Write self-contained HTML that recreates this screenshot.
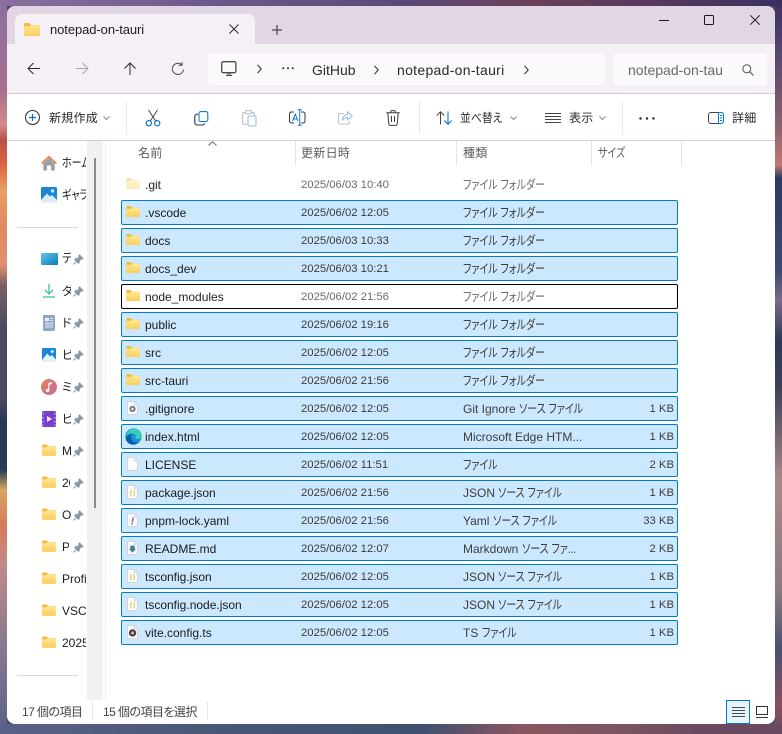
<!DOCTYPE html>
<html lang="ja"><head><meta charset="utf-8"><title>notepad-on-tauri</title>
<style>
html,body{margin:0;padding:0;width:782px;height:734px;overflow:hidden;background:#4a4a66}
*{box-sizing:border-box}
body{position:relative;font-family:"Liberation Sans","Noto Sans CJK JP",sans-serif;font-feature-settings:"palt";color:#1c1c1c}
.a{position:absolute}
.a,span.a{white-space:nowrap}
b{font-weight:normal;font-size:12.5px;letter-spacing:0;display:inline-block;transform:scaleX(.8);transform-origin:0 50%}
#win{position:absolute;left:7px;top:6px;width:768px;height:718px;border-radius:8px;background:#fff;overflow:hidden}
#layer{position:absolute;left:0;top:0;width:782px;height:734px}
.row{position:absolute;left:121px;width:557px;height:25px;border-radius:2px}
.sel{background:#cce8ff;border:1px solid #0078d4}
.foc{background:#fff;border:1px solid #000}
.non{border:1px solid transparent}
.row span{position:absolute;top:4px;line-height:16px;white-space:nowrap}
.n{left:23px;font-size:12px;color:#1a1a1a}
.d{left:179px;font-size:11.3px;color:#4a4a4a}
.t{left:341px;font-size:12px;color:#3c3c3c;width:122px;overflow:hidden}
.s{right:3px;font-size:11.3px;color:#3c3c3c}
.sel .d{color:#3a3a3a}
.non .n,.foc .n{color:#222}
.foc .d,.foc .t,.non .d,.non .t{color:#6b6b6b}
.row svg{position:absolute}
.r{left:4px;top:5px}
.i{left:5px;top:4px}
.h{top:145px;font-size:12px;line-height:16px;color:#5c5c5c;letter-spacing:.3px}
.hs{top:141px;width:1px;height:25px;background:#e5e5e5}
.ts{top:102px;width:1px;height:32px;background:#e6e6e6}
.tl{top:110px;font-size:12px;line-height:16px;color:#2a2a2a;letter-spacing:.25px}
.nt{font-size:14px;line-height:18px;color:#2c2c2c;top:61px}
.si{left:62px;font-size:12px;line-height:16px;color:#1c1c1c;overflow:hidden}
.pin{left:73px}
svg{display:block;overflow:visible}
.st{top:704px;font-size:12px;line-height:16px;color:#444;letter-spacing:-.55px}
</style></head><body>
<svg width="0" height="0" style="position:absolute">
<defs>
<linearGradient id="fg" x1="0" y1="0" x2="0" y2="1"><stop offset="0" stop-color="#ffe898"/><stop offset="1" stop-color="#fcce58"/></linearGradient>
<symbol id="f" viewBox="0 0 16 13"><path d="M0 1.5A1.5 1.5 0 0 1 1.5 0H5L7 2H14.5A1.5 1.5 0 0 1 16 3.5V11.5A1.5 1.5 0 0 1 14.5 13H1.5A1.5 1.5 0 0 1 0 11.5Z" fill="#f5bc3c"/><path d="M0 3.4H5.2L7.2 2.2H14.5A1.5 1.5 0 0 1 16 3.7V11.5A1.5 1.5 0 0 1 14.5 13H1.5A1.5 1.5 0 0 1 0 11.5Z" fill="url(#fg)"/></symbol>
<symbol id="doc" viewBox="0 0 12 15"><path d="M.5 1.2A.7.7 0 0 1 1.2.5H8L11.5 4V13.8A.7.7 0 0 1 10.8 14.5H1.2A.7.7 0 0 1 .5 13.8Z" fill="#fbfbfb" stroke="#d0d0d0"/><path d="M8 .5V4H11.5" fill="#ececec" stroke="#d4d4d4"/></symbol>
<symbol id="gear" viewBox="0 0 12 15"><use href="#doc" width="12" height="15"/><circle cx="6" cy="8.5" r="2.4" fill="#d8dadc" stroke="#6f7780" stroke-width="2"/><circle cx="6" cy="8.5" r=".9" fill="#fff"/></symbol>
<symbol id="json" viewBox="0 0 12 15"><use href="#doc" width="12" height="15"/><path d="M5 6Q4.2 6 4.2 6.9V8.2Q4.2 9 3.6 9Q4.2 9 4.2 9.8V11Q4.2 11.9 5 11.9M7 6Q7.8 6 7.8 6.9V8.2Q7.8 9 8.4 9Q7.8 9 7.8 9.8V11Q7.8 11.9 7 11.9" fill="none" stroke="#c9bb40" stroke-width="1"/></symbol>
<symbol id="yaml" viewBox="0 0 12 15"><use href="#doc" width="12" height="15"/><path d="M6.8 4.8L5.8 9.8" stroke="#9a4fb5" stroke-width="1.6"/><circle cx="5.4" cy="11.6" r="1" fill="#9a4fb5"/></symbol>
<symbol id="md" viewBox="0 0 12 15"><use href="#doc" width="12" height="15"/><path d="M3.6 5H8.4V8.5H9.8L6 12.5L2.2 8.5H3.6Z" fill="#3f7c9c"/></symbol>
<symbol id="vite" viewBox="0 0 12 15"><use href="#doc" width="12" height="15"/><circle cx="6" cy="8.5" r="4" fill="#4b3a4a"/><circle cx="6" cy="8.5" r="1.7" fill="#eaa8a8"/></symbol>
<symbol id="edge" viewBox="0 0 17 17"><circle cx="8.5" cy="8.5" r="8.2" fill="#1493dc"/><path d="M1 9C1.5 4 5 .6 9 .4C13.5.2 16.8 3.5 16.8 8.5C16.8 10 15 11 12.5 11C10.5 11 9.8 10 10.5 9C11.5 7.5 10 5.5 7.5 5.5C4 5.5 1.5 7.5 1 9Z" fill="#38cdb4"/><path d="M6 9.5C6 13 9.5 15.5 13.5 14C11.5 16.5 8 17.4 5 16C2 14.5.6 12 .8 9.5C2 7.3 4.5 6 7 6.3C6.4 7.3 6 8.3 6 9.5Z" fill="#0e5ba8"/></symbol>
<symbol id="pin" viewBox="0 0 11 11"><path d="M6.5 .8L10.2 4.5L9.2 5.2L8.2 5L6.3 7L6.3 8.8L5.3 9.4L1.6 5.7L2.2 4.7H4L6 2.8L5.8 1.7Z" fill="#8f979e" stroke="#8f979e" stroke-width=".8" stroke-linejoin="round"/><path d="M3 8L.6 10.4" stroke="#8f979e" stroke-width="1.1"/></symbol>
</defs></svg>

<!-- wallpaper -->
<div class="a" style="left:0;top:0;width:7px;height:734px;background:linear-gradient(180deg,#8b6fa0 0,#a8708f 90px,#d08a88 125px,#b84f4a 140px,#e0653f 165px,#e8a060 190px,#e08a60 225px,#e09070 265px,#7a6068 285px,#4a4a60 330px,#4a4a60 400px,#2a3a55 420px,#2a3a55 470px,#d8a860 490px,#d87a5a 525px,#c08a88 565px,#8a7a90 640px,#5a6088 734px)"></div>
<div class="a" style="left:775px;top:0;width:7px;height:734px;background:linear-gradient(180deg,#3a3060 0,#5a4a70 60px,#8a6070 125px,#c07a70 165px,#2a3a60 178px,#3a4a70 270px,#7a6a88 300px,#2a3a58 340px,#3a4058 385px,#a88888 480px,#8a7a80 590px,#4a5070 650px,#8a5060 705px,#6a4a60 734px)"></div>
<div class="a" style="left:0;top:0;width:782px;height:6px;background:linear-gradient(90deg,#8b6f9e 0,#6d5a8c 200px,#5a4a7a 400px,#6a4058 530px,#5a3a5e 640px,#3a3060 782px)"></div>
<div class="a" style="left:0;top:724px;width:782px;height:10px;background:linear-gradient(90deg,#5a6088 0,#4a5878 200px,#3f5070 420px,#8a5560 520px,#7a5560 620px,#6a4a60 700px,#6a4a60 782px)"></div>

<div id="win">
<div id="layer" style="left:-7px;top:-6px">
<!-- chrome backgrounds -->
<div class="a" style="left:0;top:0;width:782px;height:44px;background:#e3d6e4"></div>
<div class="a" style="left:0;top:44px;width:782px;height:49px;background:#f5f0f5"></div>
<div class="a" style="left:0;top:93px;width:782px;height:1px;background:#dccbd6"></div>
<div class="a" style="left:0;top:140px;width:782px;height:1px;background:#dccbd6"></div>
<!-- tab -->
<div class="a" style="left:15px;top:14px;width:240px;height:31px;background:#f5f0f5;border-radius:7px 7px 0 0"></div>
<svg class="a" style="left:24px;top:23px" width="16" height="13"><use href="#f" width="16" height="13"/></svg>
<span class="a" style="left:50px;top:22px;font-size:13px;line-height:16px;color:#1c1c1c;letter-spacing:-.08px">notepad-on-tauri</span>
<svg class="a" style="left:229px;top:24px" width="10" height="10"><path d="M.5.5L9.5 9.5M9.5.5L.5 9.5" stroke="#2a2a2a" stroke-width="1"/></svg>
<svg class="a" style="left:272px;top:25px" width="10" height="10"><path d="M5 0V10M0 5H10" stroke="#2a2a2a" stroke-width="1"/></svg>
<!-- window controls -->
<div class="a" style="left:659px;top:20px;width:10px;height:1px;background:#1a1a1a"></div>
<div class="a" style="left:704px;top:15px;width:10px;height:10px;border:1px solid #1a1a1a;border-radius:1.5px"></div>
<svg class="a" style="left:750px;top:15px" width="10" height="10"><path d="M.3.3L9.7 9.7M9.7.3L.3 9.7" stroke="#1a1a1a" stroke-width="1"/></svg>
<!-- nav -->
<svg class="a" style="left:27px;top:62px" width="14" height="13"><path d="M13 6.5H1.5M6.5 1L1 6.5L6.5 12" fill="none" stroke="#2a2a2a" stroke-width="1"/></svg>
<svg class="a" style="left:75px;top:62px" width="14" height="13"><path d="M1 6.5H12.5M7.5 1L13 6.5L7.5 12" fill="none" stroke="#aaa6ab" stroke-width="1"/></svg>
<svg class="a" style="left:123px;top:62px" width="14" height="14"><path d="M7 13V1.5M1.5 6.5L7 1L12.5 6.5" fill="none" stroke="#2a2a2a" stroke-width="1"/></svg>
<svg class="a" style="left:171px;top:62px" width="14" height="14"><path d="M12.5 7.5A5.6 5.6 0 1 1 10.6 2.6M11 0V3.2H7.8" fill="none" stroke="#4a4a4a" stroke-width="1"/></svg>
<div class="a" style="left:208px;top:53px;width:397px;height:32px;background:#fbf9fb;border-radius:4px"></div>
<div class="a" style="left:613px;top:53px;width:154px;height:33px;background:#fbf9fb;border-radius:4px"></div>
<svg class="a" style="left:221px;top:61px" width="16" height="16"><rect x=".7" y=".7" width="14.2" height="11" rx="1.6" fill="none" stroke="#4a4a4a" stroke-width="1.3"/><path d="M5 14.5H11M7 12V14M9 12V14" stroke="#4a4a4a" stroke-width="1"/></svg>
<svg class="a" style="left:257px;top:64px" width="5" height="10"><path d="M.5.8L4.2 5L.5 9.2" fill="none" stroke="#2a2a2a" stroke-width="1"/></svg>
<svg class="a" style="left:282px;top:67px" width="12" height="3"><circle cx="1.2" cy="1.2" r="1" fill="#333"/><circle cx="6" cy="1.2" r="1" fill="#333"/><circle cx="10.8" cy="1.2" r="1" fill="#333"/></svg>
<span class="a nt" style="left:312px">GitHub</span>
<svg class="a" style="left:374px;top:65px" width="5" height="10"><path d="M.5.8L4.2 5L.5 9.2" fill="none" stroke="#2a2a2a" stroke-width="1"/></svg>
<span class="a nt" style="left:397px;letter-spacing:.3px">notepad-on-tauri</span>
<svg class="a" style="left:524px;top:65px" width="5" height="10"><path d="M.5.8L4.2 5L.5 9.2" fill="none" stroke="#2a2a2a" stroke-width="1"/></svg>
<span class="a nt" style="left:628px;width:94px;overflow:hidden;color:#6a6a6a">notepad-on-tauri</span>
<svg class="a" style="left:742px;top:64px" width="12" height="12"><circle cx="4.8" cy="4.8" r="4" fill="none" stroke="#555" stroke-width="1"/><path d="M7.8 7.8L11.5 11.5" stroke="#555" stroke-width="1.1"/></svg>
<!-- toolbar -->
<svg class="a" style="left:25px;top:110px" width="16" height="16"><circle cx="7.5" cy="7.5" r="7" fill="none" stroke="#3a3a3a" stroke-width="1.1"/><path d="M7.5 4V11M4 7.5H11" stroke="#0a6cc4" stroke-width="1.2"/></svg>
<span class="a tl" style="left:49px">新規作成</span>
<svg class="a" style="left:103px;top:116px" width="7" height="5"><path d="M.5.5L3.5 3.5L6.5.5" fill="none" stroke="#8a8a8a"/></svg>
<div class="a ts" style="left:126px"></div>
<svg class="a" style="left:145px;top:109px" width="16" height="18"><path d="M3.5 1L11 12.5M12.5 1L5 12.5" fill="none" stroke="#444" stroke-width="1"/><circle cx="3.8" cy="14.2" r="2.6" fill="none" stroke="#0a78d4" stroke-width="1.2"/><circle cx="12.2" cy="14.2" r="2.6" fill="none" stroke="#0a78d4" stroke-width="1.2"/></svg>
<svg class="a" style="left:194px;top:111px" width="15" height="15"><rect x="5" y=".6" width="8.8" height="10" rx="2" fill="none" stroke="#0a78d4" stroke-width="1.1"/><path d="M4 3.2H3A2.2 2.2 0 0 0 .8 5.4V11.6A2.4 2.4 0 0 0 3.2 14H8.5A2 2 0 0 0 10.5 12.5" fill="none" stroke="#333" stroke-width="1.1"/></svg>
<svg class="a" style="left:242px;top:110px" width="15" height="17"><path d="M3 2.5H1.8A1.2 1.2 0 0 0 .6 3.7V13A1.2 1.2 0 0 0 1.8 14.2H5M10 2.5H11.2A1.2 1.2 0 0 1 12.4 3.7V5.5" fill="none" stroke="#bbb" stroke-width="1"/><rect x="3.5" y=".6" width="6" height="3.2" rx="1" fill="none" stroke="#bbb"/><rect x="6" y="6" width="8" height="10" rx="1.5" fill="none" stroke="#8fc4ea" stroke-width="1.1"/></svg>
<svg class="a" style="left:289px;top:109px" width="17" height="17"><path d="M5 3H2.5A2 2 0 0 0 .5 5V12A2 2 0 0 0 2.5 14H5M12 3H14A2 2 0 0 1 16 5V12A2 2 0 0 1 14 14H12" fill="none" stroke="#333" stroke-width="1"/><path d="M3.5 12L6.3 5.2L9 12M4.5 10H8" fill="none" stroke="#0a78d4" stroke-width="1"/><path d="M8.6 .7H12.8M10.7.7V16.3M8.6 16.3H12.8" fill="none" stroke="#0a78d4" stroke-width="1"/></svg>
<svg class="a" style="left:338px;top:111px" width="15" height="14"><path d="M5.5 2.5H2A1.4 1.4 0 0 0 .6 3.9V11.6A1.4 1.4 0 0 0 2 13H10A1.4 1.4 0 0 0 11.4 11.6V10" fill="none" stroke="#c0c0c0" stroke-width="1"/><path d="M9.5.8L14.3 4.8L9.5 8.8V6.5C7 6.5 5.5 7.5 4.5 9.5C4.5 6 6.5 3.5 9.5 3.2Z" fill="none" stroke="#8fc4ea" stroke-width="1"/></svg>
<svg class="a" style="left:386px;top:110px" width="14" height="16"><path d="M.3 2.8H13.7M4.8 2.8V1.6A1 1 0 0 1 5.8.6H8.2A1 1 0 0 1 9.2 1.6V2.8M1.8 2.8L2.8 14A1.6 1.6 0 0 0 4.4 15.4H9.6A1.6 1.6 0 0 0 11.2 14L12.2 2.8M5.5 6V12M8.5 6V12" fill="none" stroke="#3a3a3a" stroke-width="1"/></svg>
<div class="a ts" style="left:419px"></div>
<svg class="a" style="left:436px;top:111px" width="17" height="14"><path d="M4.5 13.5V.8M.8 4.5L4.5.8L8.2 4.5" fill="none" stroke="#444" stroke-width="1"/><path d="M12 .5V13.2M8.3 9.5L12 13.2L15.7 9.5" fill="none" stroke="#0a78d4" stroke-width="1.1"/></svg>
<span class="a tl" style="left:460px"><b style="font-size:12px;transform:scaleX(.9)">並べ替え</b></span>
<svg class="a" style="left:510px;top:116px" width="7" height="5"><path d="M.5.5L3.5 3.5L6.5.5" fill="none" stroke="#8a8a8a"/></svg>
<svg class="a" style="left:545px;top:113px" width="16" height="10"><path d="M0 .5H16M0 3.5H16M0 6.5H16M0 9.5H16" stroke="#444" stroke-width="1"/></svg>
<span class="a tl" style="left:569px">表示</span>
<svg class="a" style="left:599px;top:116px" width="7" height="5"><path d="M.5.5L3.5 3.5L6.5.5" fill="none" stroke="#8a8a8a"/></svg>
<div class="a ts" style="left:622px"></div>
<svg class="a" style="left:639px;top:117px" width="16" height="3"><circle cx="1.5" cy="1.5" r="1.2" fill="#222"/><circle cx="8" cy="1.5" r="1.2" fill="#222"/><circle cx="14.5" cy="1.5" r="1.2" fill="#222"/></svg>
<svg class="a" style="left:708px;top:112px" width="16" height="12"><rect x=".5" y=".5" width="15" height="11" rx="2.5" fill="none" stroke="#444"/><path d="M10.5.5H13A2.5 2.5 0 0 1 15.5 3V9A2.5 2.5 0 0 1 13 11.5H10.5Z" fill="#fff" stroke="#0a78d4"/><path d="M12 3.5H14M12 6H14M12 8.5H14" stroke="#0a78d4"/></svg>
<span class="a tl" style="left:732px">詳細</span>
<!-- sidebar -->
<div class="a" style="left:87px;top:141px;width:16px;height:559px;background:#f1f1f1"></div>
<div class="a" style="left:94px;top:158px;width:2px;height:350px;background:#8a8a8a"></div>
<div class="a" style="left:105px;top:141px;width:1px;height:559px;background:#f0f0f0"></div>
<div class="a" style="left:17px;top:227px;width:61px;height:1px;background:#d8d8d8"></div>
<div class="a" style="left:17px;top:675px;width:61px;height:1px;background:#d8d8d8"></div>

<svg class="a" style="left:41px;top:155px" width="16" height="16"><path d="M8 .5L16 8L14.6 9L8 3L1.4 9L0 8Z" fill="#e2824a"/><path d="M2.3 8.5L8 3.2L13.7 8.5V15.5H10V10.5H6V15.5H2.3Z" fill="#9aa0a8"/></svg>
<span class="a si" style="top:155px;width:24px"><b>ホーム</b></span>
<svg class="a" style="left:41px;top:187px" width="16" height="16"><rect width="16" height="15.5" rx="1.5" fill="#1a86d8"/><path d="M0 13L6 6.5L9 9.5L11 8L16 13V14A1.5 1.5 0 0 1 14.5 15.5H1.5A1.5 1.5 0 0 1 0 14Z" fill="#d8ecfa"/><circle cx="11.5" cy="4" r="1.7" fill="#cfe8fa"/></svg>
<span class="a si" style="top:187px;width:24px"><b>ギャラ</b></span>

<svg class="a" style="left:41px;top:253px" width="17" height="12"><defs><linearGradient id="dk" x1="0" y1="0" x2="1" y2="1"><stop offset="0" stop-color="#5fc8ea"/><stop offset="1" stop-color="#0d78b8"/></linearGradient></defs><rect width="17" height="12" rx="1" fill="url(#dk)"/></svg>
<span class="a si" style="top:250px;width:9px">デ</span><svg class="a pin" style="top:254px" width="11" height="11"><use href="#pin" width="11" height="11"/></svg>
<svg class="a" style="left:43px;top:284px" width="12" height="14"><path d="M6 0V9.5M1.8 5.8L6 10L10.2 5.8M0 13H12" fill="none" stroke="#3dbfa2" stroke-width="1.3"/></svg>
<span class="a si" style="top:283px;width:9px">ダ</span><svg class="a pin" style="top:286px" width="11" height="11"><use href="#pin" width="11" height="11"/></svg>
<svg class="a" style="left:43px;top:315px" width="12" height="16"><rect width="12" height="16" rx="1.2" fill="#8fa8c4"/><rect x="2" y="3" width="4" height="3" fill="#eef3f8"/><path d="M7 3.5H10M7 5.5H10M2 8H10M2 10H10M2 12H10" stroke="#dde6ef" stroke-width=".9"/></svg>
<span class="a si" style="top:315px;width:9px">ド</span><svg class="a pin" style="top:318px" width="11" height="11"><use href="#pin" width="11" height="11"/></svg>
<svg class="a" style="left:42px;top:348px" width="14" height="14"><rect width="14" height="14" rx="1.2" fill="#1a86d8"/><path d="M0 12L5.2 5.5L8 8.5L10 7L14 11.5V12.8A1.2 1.2 0 0 1 12.8 14H1.2A1.2 1.2 0 0 1 0 12.8Z" fill="#e4f2fb"/><circle cx="10.2" cy="3.5" r="1.5" fill="#d5ebfa"/></svg>
<span class="a si" style="top:347px;width:9px">ピ</span><svg class="a pin" style="top:350px" width="11" height="11"><use href="#pin" width="11" height="11"/></svg>
<svg class="a" style="left:41px;top:379px" width="16" height="16"><defs><linearGradient id="mu" x1="0" y1="0" x2="1" y2="1"><stop offset="0" stop-color="#e9825a"/><stop offset="1" stop-color="#c46a9a"/></linearGradient></defs><circle cx="8" cy="8" r="8" fill="url(#mu)"/><path d="M7.2 11V4L11 3.2V5L8.4 5.6V11.4A1.8 1.6 0 1 1 7.2 10Z" fill="#fff"/></svg>
<span class="a si" style="top:379px;width:9px">ミ</span><svg class="a pin" style="top:382px" width="11" height="11"><use href="#pin" width="11" height="11"/></svg>
<svg class="a" style="left:42px;top:411px" width="14" height="16"><rect width="14" height="16" rx="1.5" fill="#7a3fd0"/><path d="M1 2V3.5M1 6V7.5M1 10V11.5M1 13.5V14.5M13 2V3.5M13 6V7.5M13 10V11.5M13 13.5V14.5" stroke="#d8c4f4" stroke-width="1.2"/><path d="M5 5L10 8L5 11Z" fill="#f3ecfc"/></svg>
<span class="a si" style="top:411px;width:9px">ビ</span><svg class="a pin" style="top:414px" width="11" height="11"><use href="#pin" width="11" height="11"/></svg>
<svg class="a" style="left:42px;top:444px" width="14" height="12"><use href="#f" width="14" height="12"/></svg>
<span class="a si" style="top:443px;width:9px">M</span><svg class="a pin" style="top:446px" width="11" height="11"><use href="#pin" width="11" height="11"/></svg>
<svg class="a" style="left:42px;top:476px" width="14" height="12"><use href="#f" width="14" height="12"/></svg>
<span class="a si" style="top:475px;width:8px">20</span><svg class="a pin" style="top:478px" width="11" height="11"><use href="#pin" width="11" height="11"/></svg>
<svg class="a" style="left:42px;top:508px" width="14" height="12"><use href="#f" width="14" height="12"/></svg>
<span class="a si" style="top:507px;width:9px">O</span><svg class="a pin" style="top:510px" width="11" height="11"><use href="#pin" width="11" height="11"/></svg>
<svg class="a" style="left:42px;top:540px" width="14" height="12"><use href="#f" width="14" height="12"/></svg>
<span class="a si" style="top:539px;width:7px">P</span><svg class="a pin" style="top:542px" width="11" height="11"><use href="#pin" width="11" height="11"/></svg>
<svg class="a" style="left:42px;top:572px" width="14" height="12"><use href="#f" width="14" height="12"/></svg>
<span class="a si" style="top:571px;width:24px">Profiles</span>
<svg class="a" style="left:42px;top:604px" width="14" height="12"><use href="#f" width="14" height="12"/></svg>
<span class="a si" style="top:603px;width:24px">VSCode</span>
<svg class="a" style="left:42px;top:636px" width="14" height="12"><use href="#f" width="14" height="12"/></svg>
<span class="a si" style="top:635px;width:24px">2025</span>
<!-- headers -->
<svg class="a" style="left:208px;top:141px" width="9" height="5"><path d="M.5 4.5L4.5.8L8.5 4.5" fill="none" stroke="#666"/></svg>
<span class="a h" style="left:138px">名前</span><div class="a hs" style="left:295px"></div>
<span class="a h" style="left:301px">更新日時</span><div class="a hs" style="left:456px"></div>
<span class="a h" style="left:463px">種類</span><div class="a hs" style="left:591px"></div>
<span class="a h" style="left:598px"><b>サイズ</b></span><div class="a hs" style="left:681px"></div>
<!-- rows -->
<div class="row non" style="top:172px"><svg class="r" style="opacity:.42" width="14" height="11"><use href="#f" width="14" height="11"/></svg><span class="n">.git</span><span class="d">2025/06/03 10:40</span><span class="t"><b>ファイル フォルダー</b></span></div>
<div class="row sel" style="top:200px"><svg class="r" width="14" height="11"><use href="#f" width="14" height="11"/></svg><span class="n">.vscode</span><span class="d">2025/06/02 12:05</span><span class="t"><b>ファイル フォルダー</b></span></div>
<div class="row sel" style="top:228px"><svg class="r" width="14" height="11"><use href="#f" width="14" height="11"/></svg><span class="n">docs</span><span class="d">2025/06/03 10:33</span><span class="t"><b>ファイル フォルダー</b></span></div>
<div class="row sel" style="top:256px"><svg class="r" width="14" height="11"><use href="#f" width="14" height="11"/></svg><span class="n">docs_dev</span><span class="d">2025/06/03 10:21</span><span class="t"><b>ファイル フォルダー</b></span></div>
<div class="row foc" style="top:284px"><svg class="r" width="14" height="11"><use href="#f" width="14" height="11"/></svg><span class="n">node_modules</span><span class="d">2025/06/02 21:56</span><span class="t"><b>ファイル フォルダー</b></span></div>
<div class="row sel" style="top:312px"><svg class="r" width="14" height="11"><use href="#f" width="14" height="11"/></svg><span class="n">public</span><span class="d">2025/06/02 19:16</span><span class="t"><b>ファイル フォルダー</b></span></div>
<div class="row sel" style="top:340px"><svg class="r" width="14" height="11"><use href="#f" width="14" height="11"/></svg><span class="n">src</span><span class="d">2025/06/02 12:05</span><span class="t"><b>ファイル フォルダー</b></span></div>
<div class="row sel" style="top:368px"><svg class="r" width="14" height="11"><use href="#f" width="14" height="11"/></svg><span class="n">src-tauri</span><span class="d">2025/06/02 21:56</span><span class="t"><b>ファイル フォルダー</b></span></div>
<div class="row sel" style="top:396px"><svg class="i" width="11" height="14"><use href="#gear" width="11" height="14"/></svg><span class="n">.gitignore</span><span class="d">2025/06/02 12:05</span><span class="t">Git Ignore <b>ソース ファイル</b></span><span class="s">1 KB</span></div>
<div class="row sel" style="top:424px"><svg style="left:3px;top:3px" width="17" height="17"><use href="#edge" width="17" height="17"/></svg><span class="n">index.html</span><span class="d">2025/06/02 12:05</span><span class="t">Microsoft Edge HTM...</span><span class="s">1 KB</span></div>
<div class="row sel" style="top:452px"><svg class="i" width="11" height="14"><use href="#doc" width="11" height="14"/></svg><span class="n">LICENSE</span><span class="d">2025/06/02 11:51</span><span class="t"><b>ファイル</b></span><span class="s">2 KB</span></div>
<div class="row sel" style="top:480px"><svg class="i" width="11" height="14"><use href="#json" width="11" height="14"/></svg><span class="n">package.json</span><span class="d">2025/06/02 21:56</span><span class="t">JSON <b>ソース ファイル</b></span><span class="s">1 KB</span></div>
<div class="row sel" style="top:508px"><svg class="i" width="11" height="14"><use href="#yaml" width="11" height="14"/></svg><span class="n">pnpm-lock.yaml</span><span class="d">2025/06/02 21:56</span><span class="t">Yaml <b>ソース ファイル</b></span><span class="s">33 KB</span></div>
<div class="row sel" style="top:536px"><svg class="i" width="11" height="14"><use href="#md" width="11" height="14"/></svg><span class="n">README.md</span><span class="d">2025/06/02 12:07</span><span class="t">Markdown <b>ソース ファ...</b></span><span class="s">2 KB</span></div>
<div class="row sel" style="top:564px"><svg class="i" width="11" height="14"><use href="#json" width="11" height="14"/></svg><span class="n">tsconfig.json</span><span class="d">2025/06/02 12:05</span><span class="t">JSON <b>ソース ファイル</b></span><span class="s">1 KB</span></div>
<div class="row sel" style="top:592px"><svg class="i" width="11" height="14"><use href="#json" width="11" height="14"/></svg><span class="n">tsconfig.node.json</span><span class="d">2025/06/02 12:05</span><span class="t">JSON <b>ソース ファイル</b></span><span class="s">1 KB</span></div>
<div class="row sel" style="top:620px"><svg class="i" width="11" height="14"><use href="#vite" width="11" height="14"/></svg><span class="n">vite.config.ts</span><span class="d">2025/06/02 12:05</span><span class="t">TS <b>ファイル</b></span><span class="s">1 KB</span></div>
<!-- status -->
<span class="a st" style="left:22px">17 個の項目</span>
<div class="a" style="left:92px;top:702px;width:1px;height:18px;background:#e8e8e8"></div>
<span class="a st" style="left:103px">15 個の項目を選択</span>
<div class="a" style="left:207px;top:702px;width:1px;height:18px;background:#e8e8e8"></div>
<div class="a" style="left:726px;top:700px;width:24px;height:24px;border:1px solid #0078d4;background:#e5f3fb"></div>
<svg class="a" style="left:732px;top:707px" width="13" height="11"><path d="M0 .5H13M0 3.5H13M0 6.5H13M0 9.5H13" stroke="#4a4a4a"/></svg>
<svg class="a" style="left:756px;top:706px" width="12" height="12"><rect x=".5" y=".5" width="11" height="8" fill="none" stroke="#333"/><path d="M0 11.5H12" stroke="#333"/></svg>
</div>
</div>
</body></html>
